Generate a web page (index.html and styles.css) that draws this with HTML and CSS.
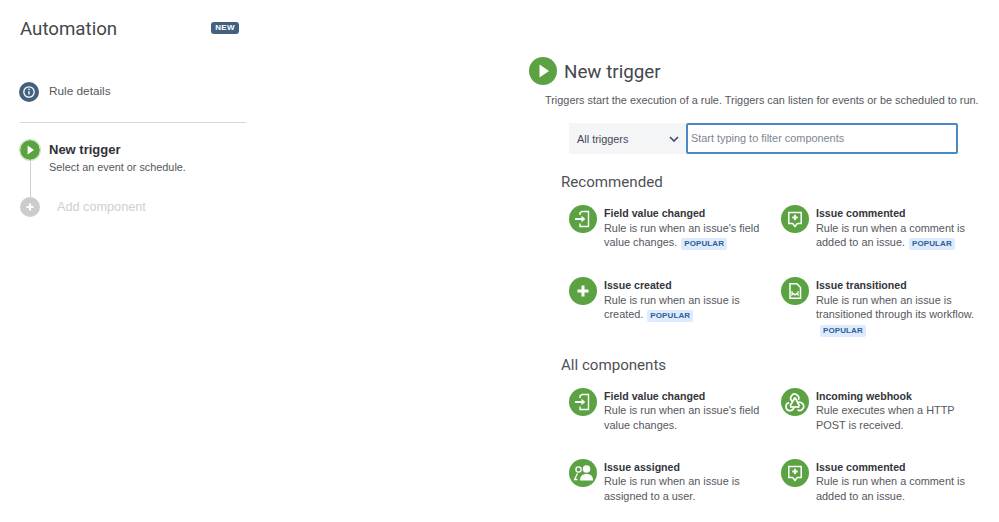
FILE: index.html
```html
<!DOCTYPE html>
<html lang="en">
<head>
<meta charset="utf-8">
<title>Automation</title>
<link rel="stylesheet" href="styles.css">
</head>
<body>
<div class="page">
  <aside class="side">
    <div class="side-head">
      <h1 class="side-title">Automation</h1>
      <span class="new-badge">NEW</span>
    </div>
    <div class="details">
      <svg class="details-icon" viewBox="0 0 20 20"><circle cx="10" cy="10" r="10" fill="#44607f"/><circle cx="10" cy="10" r="5.2" fill="none" stroke="#fff" stroke-width="1.3"/><path d="M10 9.3v3.2" stroke="#fff" stroke-width="1.4"/><circle cx="10" cy="7.4" r=".8" fill="#fff"/></svg>
      <span class="details-label">Rule details</span>
    </div>
    <hr class="divider">
    <div class="step">
      <div class="rail">
        <svg class="step-icon glow" viewBox="0 0 20 20"><circle cx="10" cy="10" r="10" fill="#5ba243"/><path d="M7.6 5.6 14 10l-6.400 4.400z" fill="#fff"/></svg>
        <div class="rail-line"></div>
      </div>
      <div class="step-text">
        <div class="step-title">New trigger</div>
        <div class="step-sub">Select an event or schedule.</div>
      </div>
    </div>
    <div class="step add">
      <svg class="step-icon add-icon" viewBox="0 0 20 20"><circle cx="10" cy="10" r="10" fill="#cccccc"/><path d="M10 6.500v7M6.500 10h7" stroke="#fff" stroke-width="2.200"/></svg>
      <span class="add-label">Add component</span>
    </div>
  </aside>

  <main class="main">
    <div class="head">
      <svg class="head-icon" viewBox="0 0 28 28"><circle cx="14" cy="14" r="14" fill="#5ba243"/><path d="M10.500 7.500 20 14l-9.500 6.500z" fill="#fff"/></svg>
      <h2 class="head-title">New trigger</h2>
    </div>
    <p class="intro">Triggers start the execution of a rule. Triggers can listen for events or be scheduled to run.</p>
    <div class="filter">
      <div class="select">
        <span>All triggers</span>
        <svg class="chev" viewBox="0 0 10 6"><path d="M1 1l4 4 4-4" fill="none" stroke="#42526e" stroke-width="1.700"/></svg>
      </div>
      <div class="input">Start typing to filter components</div>
    </div>

    <h3 class="section rec">Recommended</h3>
    <div class="cards">
      <div class="card">
        <svg class="icon" viewBox="0 0 28 28"><circle cx="14" cy="14" r="14" fill="#5ba243"/><path d="M11 10V7.800l2-1.300h6.500v15H11V18.500" fill="none" stroke="#fff" stroke-width="1.400"/><path d="M6 14h7" stroke="#fff" stroke-width="2"/><path d="M12.500 10.800 16.300 14l-3.800 3.200z" fill="#fff"/></svg>
        <div class="body"><div class="title">Field value changed</div>Rule is run when an issue's field value changes.<span class="pop">POPULAR</span></div>
      </div>
      <div class="card">
        <svg class="icon" viewBox="0 0 28 28"><circle cx="14" cy="14" r="14" fill="#5ba243"/><path d="M7.800 7.500h12.400v11h-3.900L14 21.500l-2.300-3H7.800z" fill="none" stroke="#fff" stroke-width="1.500"/><path d="M14 9.800v5.400M11.300 12.500h5.400" stroke="#fff" stroke-width="1.800"/></svg>
        <div class="body"><div class="title">Issue commented</div>Rule is run when a comment is added to an issue.<span class="pop">POPULAR</span></div>
      </div>
      <div class="card">
        <svg class="icon" viewBox="0 0 28 28"><circle cx="14" cy="14" r="14" fill="#5ba243"/><path d="M14 8.500v11M8.500 14h11" stroke="#fff" stroke-width="3"/></svg>
        <div class="body"><div class="title">Issue created</div>Rule is run when an issue is created.<span class="pop">POPULAR</span></div>
      </div>
      <div class="card">
        <svg class="icon" viewBox="0 0 28 28"><circle cx="14" cy="14" r="14" fill="#5ba243"/><path d="M9 6.800h6.800L19.500 10.500v10.700H9z" fill="none" stroke="#fff" stroke-width="1.500"/><path d="M11 14v4l1.500-1.700 1.500 1.700 1.500-1.700 1.500 1.700v-4" fill="none" stroke="#fff" stroke-width="1.200"/></svg>
        <div class="body"><div class="title">Issue transitioned</div>Rule is run when an issue is transitioned through its workflow. <span class="pop">POPULAR</span></div>
      </div>
    </div>

    <h3 class="section all">All components</h3>
    <div class="cards">
      <div class="card">
        <svg class="icon" viewBox="0 0 28 28"><circle cx="14" cy="14" r="14" fill="#5ba243"/><path d="M11 10V7.800l2-1.300h6.500v15H11V18.500" fill="none" stroke="#fff" stroke-width="1.400"/><path d="M6 14h7" stroke="#fff" stroke-width="2"/><path d="M12.500 10.800 16.300 14l-3.800 3.200z" fill="#fff"/></svg>
        <div class="body"><div class="title">Field value changed</div>Rule is run when an issue's field value changes.</div>
      </div>
      <div class="card">
        <svg class="icon" viewBox="0 0 28 28"><circle cx="14" cy="14" r="14" fill="#5ba243"/><g fill="none" stroke="#fff" stroke-width="1.700"><path d="M11.300 13.300A4 4 0 1 1 17.400 11.800"/><path d="M14 9.500l4.500 8.500"/><path d="M14 9.500 9 18"/><path d="M12.900 19.500A4 4 0 1 1 8.200 14.700"/><path d="M9 19h9.500"/><path d="M16.200 15.200A4 4 0 1 1 16.500 21.800"/></g></svg>
        <div class="body"><div class="title">Incoming webhook</div>Rule executes when a HTTP POST is received.</div>
      </div>
      <div class="card">
        <svg class="icon" viewBox="0 0 28 28"><circle cx="14" cy="14" r="14" fill="#5ba243"/><circle cx="17.500" cy="10" r="3.800" fill="#fff"/><path d="M11 21.500c0-4.500 2.500-6.500 6.500-6.500s6.500 2 6.500 6.500z" fill="#fff"/><circle cx="9.500" cy="10.500" r="2.600" fill="none" stroke="#fff" stroke-width="1.300"/><path d="M8.500 14.500 5.500 20.500h3" fill="none" stroke="#fff" stroke-width="1.300"/></svg>
        <div class="body"><div class="title">Issue assigned</div>Rule is run when an issue is assigned to a user.</div>
      </div>
      <div class="card">
        <svg class="icon" viewBox="0 0 28 28"><circle cx="14" cy="14" r="14" fill="#5ba243"/><path d="M7.800 7.500h12.400v11h-3.900L14 21.500l-2.300-3H7.800z" fill="none" stroke="#fff" stroke-width="1.500"/><path d="M14 9.800v5.400M11.300 12.500h5.400" stroke="#fff" stroke-width="1.800"/></svg>
        <div class="body"><div class="title">Issue commented</div>Rule is run when a comment is added to an issue.</div>
      </div>
    </div>
  </main>
</div>
</body>
</html>
```
FILE: styles.css
```css
* { box-sizing: border-box; }
html, body { margin: 0; height: 100%; overflow: hidden; background: #fff; }
body { font: 10.9px/14.5px "Liberation Sans", Arial, sans-serif; color: #55585e; }

.page { display: flex; height: 522px; }

.side { width: 226px; margin-left: 20px; padding-top: 17px; flex: none; }
.side-head { display: flex; justify-content: space-between; align-items: flex-start; padding-right: 7px; }
.side-title { margin: 0; font: 400 18.7px/24px Roboto, sans-serif; color: #44474c; }
.new-badge { margin-top: 5px; background: #44607f; color: #fff; border-radius: 3px; padding: 0 4px; font: 700 8px/12px "Liberation Sans", sans-serif; letter-spacing: .4px; }

.details { display: flex; align-items: center; gap: 10px; margin: 41px 0 0 -1px; height: 20px; font-size: 11.8px; }
.details-icon { width: 20px; height: 20px; flex: none; }
.details-label { padding-bottom: 2px; }
.divider { border: 0; border-top: 1px solid #d8d8d8; margin: 20px 0 0; }

.step { display: flex; }
.step:not(.add) { margin-top: 17px; }
.rail { width: 20px; height: 57px; display: flex; flex-direction: column; align-items: center; }
.rail-line { width: 1px; flex: 1; background: #cfcfcf; }
.step-icon { width: 20px; height: 20px; flex: none; }
.glow { border-radius: 50%; box-shadow: 0 0 0 1px #c6e6b8; }
.step-text { margin-left: 9px; }
.step-title { font-size: 13px; font-weight: 700; line-height: 20px; color: #303338; }
.step-sub { font-size: 10.85px; line-height: 14px; }
.add { align-items: center; }
.add-label { margin-left: 17px; font-size: 12.7px; color: #cfcfcf; }

.main { margin-left: 283px; padding-top: 56px; flex: none; width: 470px; }
.head { display: flex; align-items: center; gap: 7px; }
.head-icon { width: 28px; height: 28px; flex: none; }
.head-title { margin: 0; padding-top: 2px; font: 400 18.8px/28px Roboto, sans-serif; color: #44474c; }
.intro { margin: 7px 0 0 16px; font-size: 10.9px; line-height: 14px; white-space: nowrap; }

.filter { display: flex; height: 31px; margin: 16px 0 0 40px; width: 389px; }
.select { width: 117px; background: #f4f5f7; display: flex; align-items: center; justify-content: space-between; padding: 1px 7px 0 8px; color: #44495a; }
.chev { width: 10px; height: 6px; }
.input { flex: 1; border: 2px solid #4a8ac4; border-radius: 2px; padding-left: 3px; display: flex; align-items: center; color: #7d8591; }

.section { margin: 0; font: 400 15.1px/20px Roboto, sans-serif; color: #4e5156; padding-left: 32px; }
.rec { margin-top: 18px; }
.all { margin-top: 18px; }

.cards { display: grid; grid-template-columns: 212px 190px; margin-left: 40px; }
.rec + .cards { margin-top: 14px; }
.all + .cards { margin-top: 14px; }
.card { display: flex; gap: 7px; height: 72px; }
.all + .cards .card { height: 71px; }
.card:nth-child(n+3) { height: auto; }
.all + .cards .card:nth-child(n+3) { height: auto; }
.icon { width: 28px; height: 28px; flex: none; margin-top: -1px; }
.body { flex: 1; }
.card:nth-child(even) .body { margin-right: -8px; }
.title { font-size: 10.6px; font-weight: 700; color: #33363b; }
.pop { display: inline-block; background: #deebff; color: #2f5f93; font-size: 8px; font-weight: 700; line-height: 12px; padding: 0 3px; border-radius: 2px; letter-spacing: .1px; margin-left: 4px; }
```
